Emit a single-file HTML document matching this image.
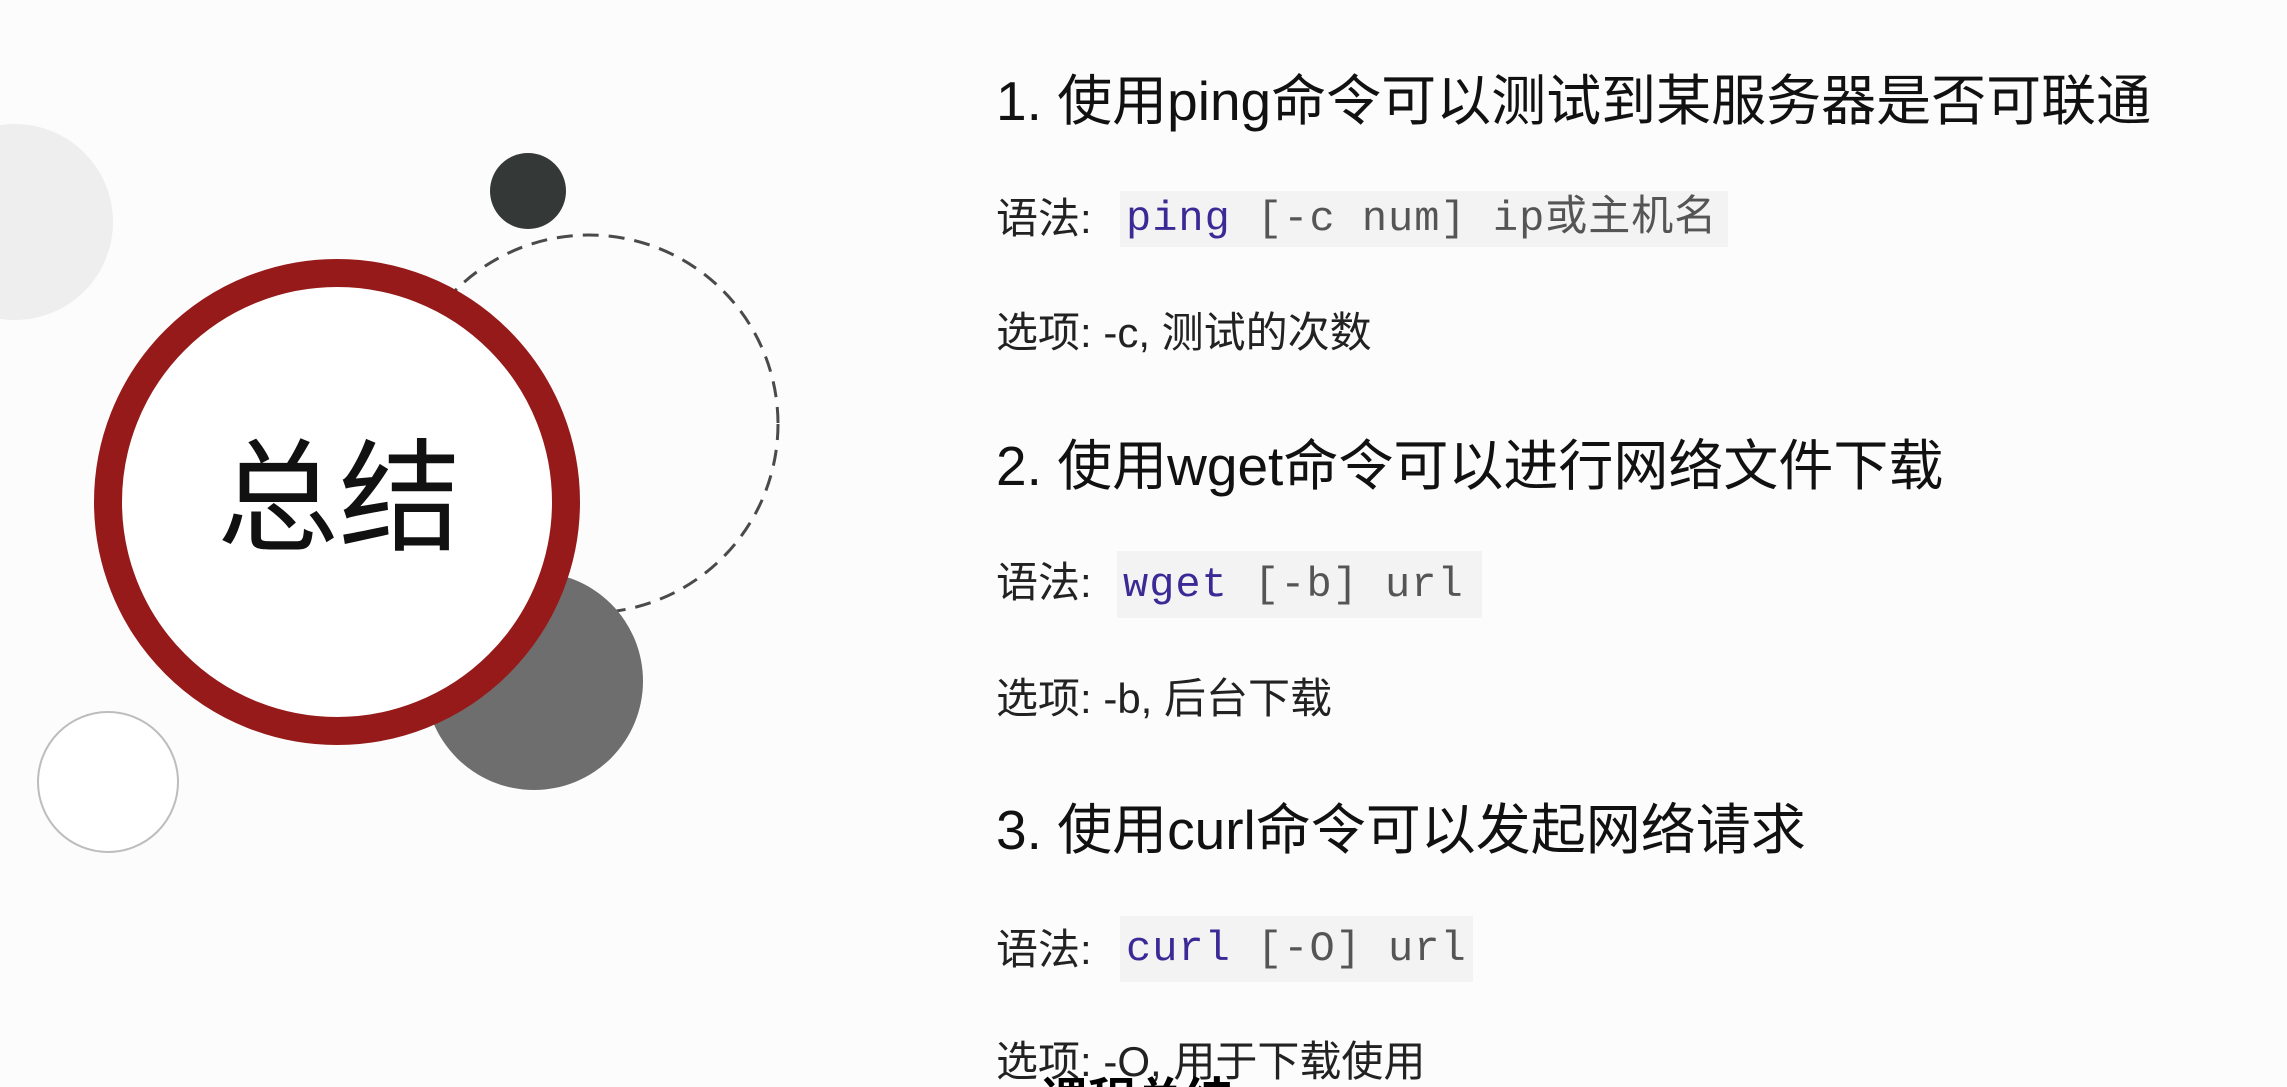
<!DOCTYPE html>
<html><head><meta charset="utf-8"><style>
html,body{margin:0;padding:0;overflow:hidden}
body{width:2287px;height:1087px;overflow:hidden;background:#fcfcfc;position:relative;font-family:"Liberation Sans","Noto Sans CJK SC",sans-serif;color:#1a1a1a}
.c{position:absolute;border-radius:50%;box-sizing:border-box}
.t{position:absolute;white-space:nowrap;line-height:1}
.code{position:absolute;background:#f3f3f3;font-family:"Liberation Mono","Noto Sans CJK SC",monospace;font-size:42px;color:#555;line-height:1;box-sizing:border-box;padding-left:6px;display:flex;align-items:center;letter-spacing:1px}
.code b{font-weight:normal;color:#3b2a96}
.h{font-size:55px;color:#111}
.s{font-size:42px;color:#222}
</style></head><body>
<div class="c" style="left:-83px;top:124px;width:196px;height:196px;background:#eeeeee"></div>
<div class="c" style="left:490px;top:153px;width:76px;height:76px;background:#343836"></div>
<svg style="position:absolute;left:398px;top:233px" width="382" height="382"><circle cx="191" cy="191" r="189" fill="none" stroke="#4a4a4a" stroke-width="3" stroke-dasharray="16 10"/></svg>
<div class="c" style="left:425px;top:572px;width:218px;height:218px;background:#6e6e6e"></div>
<div class="c" style="left:94px;top:259px;width:486px;height:486px;background:#fff;border:28px solid #961a1a"></div>
<div class="t" style="left:217px;top:438px;font-size:122px;color:#111">总结</div>
<div class="c" style="left:37px;top:711px;width:142px;height:142px;border:2px solid #bdbdbd;background:#fff"></div>

<div class="t h" style="left:996px;top:74px">1. 使用ping命令可以测试到某服务器是否可联通</div>
<div class="t s" style="left:996px;top:198px">语法:</div>
<div class="code" style="left:1120px;top:191px;width:608px;height:56px"><b>ping</b>&nbsp;[-c num] ip或主机名</div>
<div class="t s" style="left:996px;top:312px">选项: -c, 测试的次数</div>

<div class="t h" style="left:996px;top:439px">2. 使用wget命令可以进行网络文件下载</div>
<div class="t s" style="left:996px;top:562px">语法:</div>
<div class="code" style="left:1117px;top:551px;width:365px;height:67px"><b>wget</b>&nbsp;[-b] url</div>
<div class="t s" style="left:996px;top:678px">选项: -b, 后台下载</div>

<div class="t h" style="left:996px;top:803px">3. 使用curl命令可以发起网络请求</div>
<div class="t s" style="left:996px;top:929px">语法:</div>
<div class="code" style="left:1120px;top:916px;width:353px;height:66px"><b>curl</b>&nbsp;[-O] url</div>
<div class="t s" style="left:996px;top:1041px">选项: -O, 用于下载使用</div>
<div style="position:absolute;left:0;top:0;width:2287px;height:1087px;overflow:hidden;pointer-events:none"><div class="t" style="left:1040px;top:1078px;font-size:48px;font-weight:bold;color:#000">课程总结</div></div>
</body></html>
